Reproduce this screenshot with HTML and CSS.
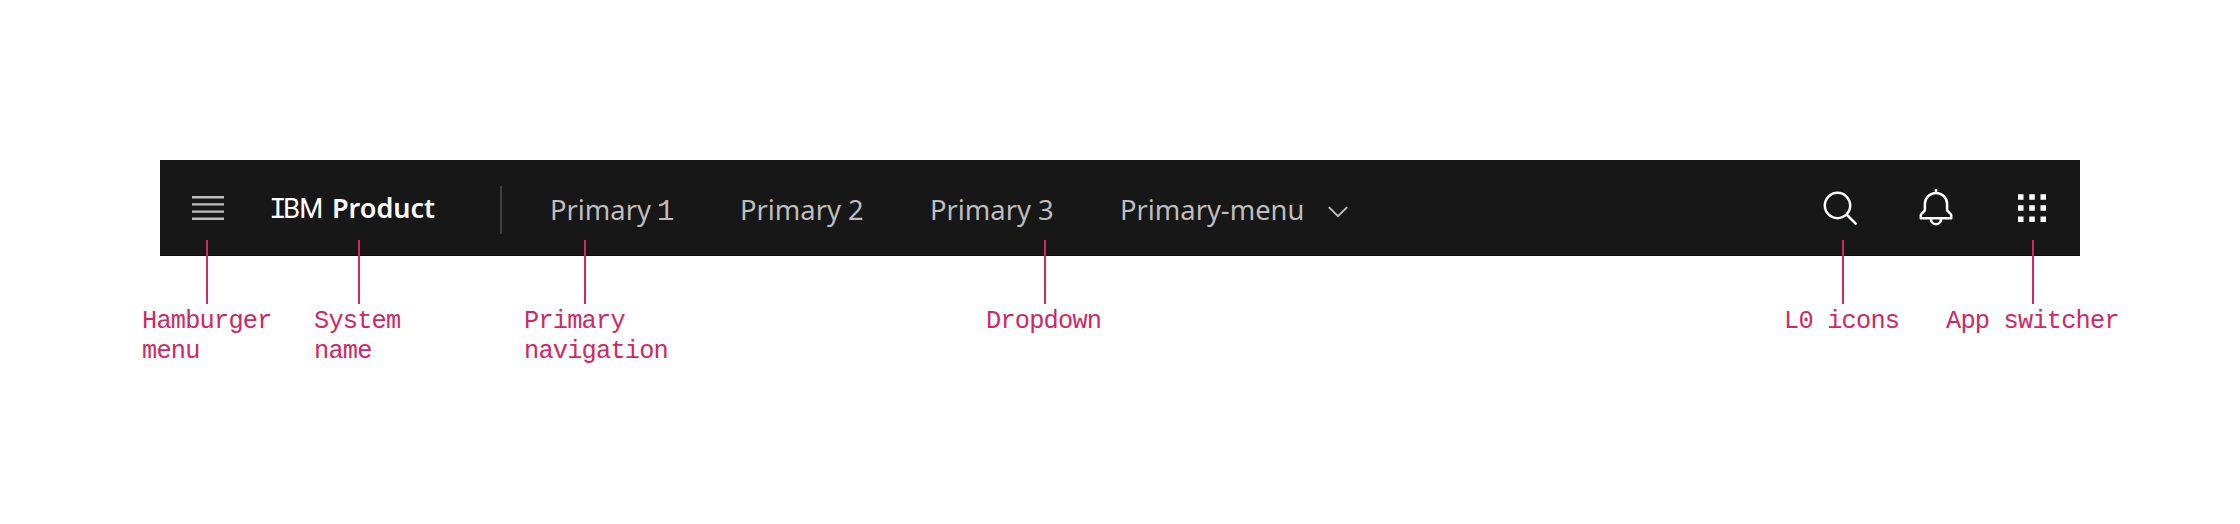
FILE: index.html
```html
<!DOCTYPE html>
<html lang="en">
<head>
<meta charset="utf-8">
<title>Header anatomy</title>
<link rel="stylesheet" href="styles.css">
</head>
<body>
<main class="stage">
  <header class="bar">
    <svg class="menu" width="32" height="24" viewBox="0 0 32 24" fill="#bebebe"><path d="M0 0h32v2.4H0zM0 7.2h32v2.4H0zM0 14.4h32v2.4H0zM0 21.6h32V24H0z"/></svg>
    <div class="name"><span class="slab">I</span><span class="bm">BM</span><b class="product">Product</b></div>
    <i class="divider"></i>
    <nav class="nav">
      <a class="link">Primary <span class="slab">1</span></a>
      <a class="link">Primary 2</a>
      <a class="link">Primary 3</a>
      <a class="link link-menu">Primary-menu</a>
      <svg class="chevron" width="20" height="12" viewBox="0 0 20 12" fill="none" stroke="#bebebe" stroke-width="2"><path d="M.8 1.1 10 10.2l9.200-9.100"/></svg>
    </nav>
    <div class="icons">
      <svg class="icon" width="36" height="40" viewBox="0 0 36 40" fill="none" stroke="#fff" stroke-width="2.500"><circle cx="15.500" cy="17.500" r="12.700"/><path d="M24.500 26.500l10 9.800"/></svg>
      <svg class="icon" width="36" height="40" viewBox="0 0 36 40" fill="none" stroke="#fff" stroke-width="2.500" stroke-linejoin="round"><path d="M18 1v4M6.900 22.300V16a11.100 11.100 0 0 1 22.200 0v6.300l3.500 3.700q.6.700.6 1.500v2.700H2.800v-2.700q0-.8.600-1.500zM13 30.200v1a5 5 0 0 0 10 0v-1"/></svg>
      <svg class="icon" width="36" height="40" viewBox="0 0 36 40" fill="#fff"><path d="M4 6.200h5.500v5.500H4zM15.300 6.200h5.500v5.500h-5.500zM26.500 6.200H32v5.500h-5.500zM4 17.300h5.500v5.500H4zM15.300 17.300h5.500v5.500h-5.500zM26.500 17.300H32v5.500h-5.500zM4 28.400h5.500v5.500H4zM15.300 28.400h5.500v5.500h-5.500zM26.500 28.400H32v5.500h-5.500z"/></svg>
    </div>
  </header>
  <div class="note note-menu">Hamburger<br>menu</div>
  <div class="note note-name">System<br>name</div>
  <div class="note note-nav">Primary<br>navigation</div>
  <div class="note note-drop">Dropdown</div>
  <div class="note note-icons">L0 icons</div>
  <div class="note note-app">App switcher</div>
</main>
</body>
</html>
```
FILE: styles.css
```css
body { margin: 0; background: #fff; }
.stage { position: relative; box-sizing: border-box; width: 2240px; height: 524px; padding: 160px 160px 0; overflow: hidden; }
.bar { box-sizing: border-box; display: flex; align-items: center; height: 96px; padding: 0 30px 0 32px; background: #171717; box-shadow: inset 0 -1px #111; color: #fff; font: 27.300px/40px "Noto Sans", sans-serif; white-space: pre; }
.menu { flex: none; }
.name { display: flex; align-items: baseline; width: 229px; margin-left: 47px; }
.slab { font-family: "Liberation Mono", monospace; font-size: 29px; line-height: 1; letter-spacing: -1px; }
.link .slab { margin-left: -1px; }
.name .slab { width: 12px; margin-left: -2px; font-size: 29.500px; }
.bm { width: 49px; letter-spacing: -.8px; font-family: Roboto, sans-serif; font-size: 27.500px; padding-left: 2px; }
.product { font-size: 27px; font-weight: 600; }
.divider { width: 2px; height: 48px; margin-top: 4px; background: #3d3d3d; }
.nav { display: flex; align-items: center; margin-left: 48px; padding-top: 4px; color: #bebebe; }
.link { width: 190px; }
.link-menu { width: 208px; }
.chevron { margin-top: 4px; }
.icons { display: flex; gap: 60px; margin-left: auto; }
.icon { flex: none; }
.note { position: absolute; top: 307px; color: #d12765; font: 25.300px/30px "Liberation Mono", monospace; letter-spacing: -.78px; white-space: nowrap; }
.note::before { content: ""; position: absolute; top: -67px; left: var(--pin); width: 2px; height: 64px; background: #d12765; }
.note-menu { left: 142px; --pin: 64px; }
.note-name { left: 314px; --pin: 44px; }
.note-nav { left: 524px; --pin: 60px; }
.note-drop { left: 986px; --pin: 58px; }
.note-icons { left: 1784px; --pin: 58px; }
.note-app { left: 1946px; --pin: 86px; }
```
